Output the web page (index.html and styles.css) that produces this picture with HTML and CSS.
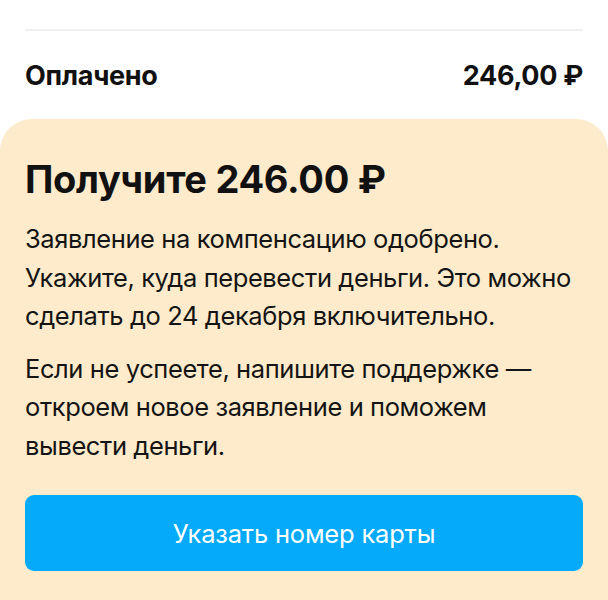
FILE: index.html
```html
<!DOCTYPE html>
<html lang="ru">
<head>
	<meta charset="UTF-8">
	<meta name="viewport" content="width=608, user-scalable=no">
	<link rel="stylesheet" href="styles.css">
</head>
<body>
 <div class="screen">
	 <div class="summary">
		 <div class="row row-prev">
			 <span class="label muted">Подписка на партнёра</span>
		 </div>
		 <div class="row row-total">
			 <span class="label">Оплачено</span>
			 <span class="value">246,00 ₽</span>
		 </div>
	 </div>

	 <div class="refund">
		 <h2>Получите 246.00 ₽</h2>
		 <p>Заявление на компенсацию одобрено. Укажите, куда перевести деньги. Это можно сделать до 24 декабря включительно.</p>
		 <p>Если не успеете, напишите поддержке — откроем новое заявление и поможем вывести деньги.</p>
		 <button class="btn" type="button">Указать номер карты</button>
	 </div>
 </div>
</body>
</html>
```
FILE: styles.css
```css
* {
	margin: 0;
	padding: 0;
	box-sizing: border-box;
}
body {
	width: 608px;
	height: 600px;
	overflow: hidden;
	background: #fff;
	font-family: "Inter", "Noto Sans", sans-serif;
	color: #111;
}
.screen {
	height: 600px;
	overflow: hidden;
}
.summary {
	padding: 0 25px;
	margin-top: -60px;
}
.row {
	display: flex;
	justify-content: space-between;
	align-items: center;
	font-size: 27px;
}
.row-prev {
	height: 91px;
	border-bottom: 2px solid #f0f0f0;
	align-items: flex-end;
	padding-bottom: 33px;
	font-size: 24px;
}
.row-total {
	height: 88px;
	font-weight: 700;
	letter-spacing: -0.3px;
}
.muted {
	color: #222;
}
.refund {
	background: #feebcb;
	border-radius: 32px 32px 0 0;
	padding: 37px 25px 40px;
	min-height: 480px;
}
h2 {
	font-size: 38px;
	font-weight: 700;
	line-height: 46px;
	margin-bottom: 18px;
	letter-spacing: -0.3px;
}
p {
	font-size: 25.5px;
	line-height: 38.5px;
	letter-spacing: -0.4px;
	color: #141414;
	margin-bottom: 14px;
}
.btn {
	display: block;
	width: 100%;
	height: 76px;
	margin-top: 30px;
	border: none;
	border-radius: 9px;
	background: #05aafb;
	color: #fff;
	font: 400 25.5px "Inter", "Noto Sans", sans-serif;
	letter-spacing: -0.2px;
}
```
